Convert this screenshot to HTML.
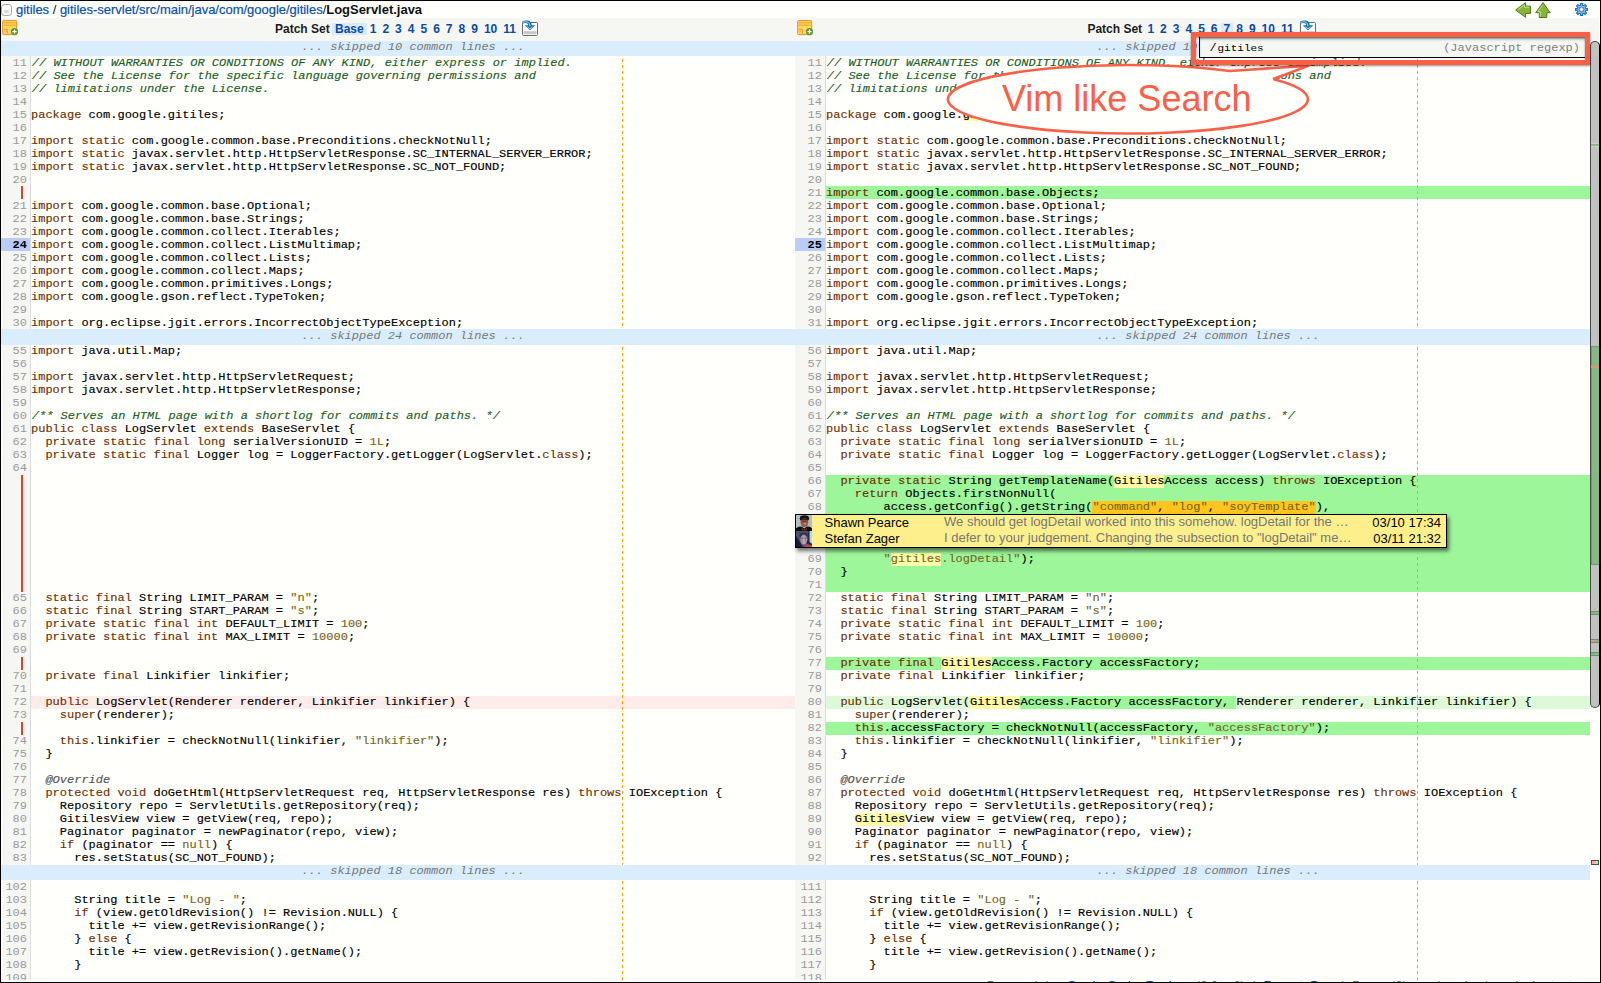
<!DOCTYPE html>
<html lang="en">
<head>
<meta charset="utf-8">
<title>gitiles / LogServlet.java</title>
<style>
html,body{margin:0;padding:0}
body{width:1601px;height:983px;background:#000;overflow:hidden;position:relative;font-family:"Liberation Sans",Arial,sans-serif}
#page{position:absolute;left:1px;top:1px;width:1599px;height:981px;background:#fffffc;overflow:hidden}
#w{position:absolute;left:-1px;top:-1px;width:1601px;height:983px}
#w>*{position:absolute}
/* top header */
#hdr{left:16px;top:2px;letter-spacing:-0.02px;height:16px;line-height:16px;font-size:13px;color:#111;white-space:pre}
#hdr a{color:#0850a8;-webkit-text-stroke:0.2px}
#hdr b{color:#111}
#cb{left:1px;top:4px;width:9.4px;height:10px;border:1.1px solid #aba6a6;border-radius:3.2px;background:linear-gradient(#fffffd,#f6f6f4)}
#cb i{position:absolute;left:1.7px;top:5.2px;width:5.7px;height:2.4px;background:#dcdcdb;border-radius:.5px}
#navbg{left:1px;top:18px;width:1598px;height:23px;background:#f6f7f3}
.nav{top:21px;height:16px;line-height:16px;font-size:12px;font-weight:bold;color:#1c1c1c;white-space:pre}
.nav a{display:inline-block;padding:0 3px;color:#0a4aa6;height:12px;line-height:12px}
.nav a.sel{background:#d8ebfa}
.nav b+a{margin-left:-1px}
/* panes */
.pane{z-index:0;top:41px;width:795px;height:939px;overflow:hidden;font-family:"Liberation Mono","Courier New",monospace;font-size:12px;line-height:13px;color:#000}
#lp{left:0}
#rp{left:795px}
.gut{position:absolute;left:1px;top:0;width:29px;height:100%;background:#f6f7f3;border-right:1px solid #dcdcdc;border-left:1px solid #fffffc;box-sizing:content-box;width:28px}
#rp .gut{left:0;width:30px;border-left:0}
.r,.pad,.skip{position:relative}
.r{height:13px}
.n{position:absolute;left:0;top:0;width:27px;height:13px;text-align:right;color:#9a9a9a;padding-right:3px}
.n.act{background:#b9cdf8;color:#000;font-weight:bold}
#lp .n.act{left:1px;width:26px}
.c{position:absolute;left:31px;right:0;top:0;height:100%}
.t{position:relative;top:1px;white-space:pre;display:inline-block;height:13px;transform-origin:0 9.7px;transform:scaleY(.86)}
.c i{position:absolute;top:0;height:13px}
.ins{background:#9ef69a}
.il{background:#def9da}
.dl{background:#fdecea}
.id{background:#9ef69a}
.sr{background:#fffba6}
.rg{background:#fec61c}
.k{color:#702e00}
.c .t{-webkit-text-stroke:0.15px}
.s{color:#776622}
.cm{color:#1c601e;font-style:italic;position:relative;left:.8px}
.m{color:#555;font-style:italic}
.skip{height:15px;background:#d9edfd;z-index:2;text-align:center;padding-left:31px;font-style:italic;color:#777;line-height:14px}
.skip .t{top:-1px}
.skip.s2{height:16px}
.skip.s2 .t{top:0}
.sec2 .t{top:0}
.bar{position:absolute;left:21px;top:0;bottom:0;width:2px;background:#e2402f}
.ruler{position:absolute;left:622px;top:15px;width:1px;height:925px;z-index:1;background:repeating-linear-gradient(to bottom,transparent 0,transparent 3px,#ffa000 3px,#ffa000 6px)}
/* comment box */
.cw{z-index:3}
.cbox{position:absolute;left:0;top:0;width:650px;height:32px;border:1px solid #000;background:#fdf08c;box-shadow:2px 3px 4px rgba(0,0,0,.55);font-family:"Liberation Sans",Arial,sans-serif;font-size:13px;line-height:16px}
.cr{position:relative;height:16px;white-space:pre}
.cr>*{position:absolute;top:0}
.av{left:0}
.who{left:28.5px;color:#000}
.msg{left:148px;top:-1px !important;color:#777}
.dt{right:5px;color:#000}
/* scrollbar */
#sb{left:1590px;top:41px;width:10px;height:667px;background:#c1c1c0;border:1px solid #4a4a4a;border-right-color:#000;box-sizing:border-box;border-radius:5px / 5px}
.tk{left:1591px;width:8px;box-sizing:border-box}
#dlg{left:1199px;top:37px;width:386px;height:20px;border-left:1px solid #000;border-bottom:1px solid #000;background:#f5f7f3;box-shadow:inset 0 3px 3px -1px rgba(70,85,90,.55);font-family:"Liberation Mono","Courier New",monospace;font-size:12px;line-height:13px;white-space:pre}
#dlg span{position:absolute;top:5px;display:inline-block;height:13px;transform-origin:0 9.7px;transform:scaleY(.86)}
#dlg .q{left:9.5px;color:#000}
#dlg .q2{left:17.5px;color:#000;font-size:11px}
#dlg .h{right:6px;color:#7f7f7f}
#red{left:1191px;top:32px;width:389px;height:23px;border:5px solid #fa6048;box-shadow:0 1px 2px rgba(0,0,0,.45),inset 0 1px 2px rgba(0,0,0,.4)}
#foot{left:975px;top:980px;width:615px;height:12px;font-size:13px;line-height:12px;word-spacing:4px;color:#777;white-space:pre;text-align:center}
#foot a{color:#0a4fa5}

</style>
</head>
<body>
<div id="page"><div id="w">
<div id="cb"><i></i></div>
<div id="hdr"><a>gitiles</a> / <a>gitiles-servlet/src/main/java/com/google/gitiles</a>/<b>LogServlet.java</b></div>
<svg style="left:1515px;top:2px" width="16" height="16" viewBox="0 0 16 16"><path d="M0.6 8 L10.6 0.7 L10.6 4.2 L15.5 4.2 L15.5 11.4 L10.6 11.4 L10.6 15.3 Z" fill="#86b53a" stroke="#4c7a1b" stroke-width="1" stroke-linejoin="miter"/><path d="M2.6 8 L9.5 3 L9.5 5.3 L14.4 5.3" fill="none" stroke="#c3dd90" stroke-width="1"/></svg>
<svg style="left:1535px;top:2px" width="16" height="16" viewBox="0 0 16 16"><path d="M8 0.6 L15.3 10.7 L11.8 10.7 L11.8 15.5 L4.3 15.5 L4.3 10.7 L0.7 10.7 Z" fill="#86b53a" stroke="#4c7a1b" stroke-width="1" stroke-linejoin="miter"/><path d="M8 2.6 L2.8 9.7 L5.4 9.7 L5.4 14.4" fill="none" stroke="#c3dd90" stroke-width="1"/></svg>
<svg style="left:1575px;top:3px" width="13" height="13" viewBox="0 0 13 13"><path d="M10.81 5.60 L12.52 5.50 L12.52 7.50 L10.81 7.40 L10.18 8.91 L11.46 10.05 L10.05 11.46 L8.91 10.18 L7.40 10.81 L7.50 12.52 L5.50 12.52 L5.60 10.81 L4.09 10.18 L2.95 11.46 L1.54 10.05 L2.82 8.91 L2.19 7.40 L0.48 7.50 L0.48 5.50 L2.19 5.60 L2.82 4.09 L1.54 2.95 L2.95 1.54 L4.09 2.82 L5.60 2.19 L5.50 0.48 L7.50 0.48 L7.40 2.19 L8.91 2.82 L10.05 1.54 L11.46 2.95 L10.18 4.09Z" fill="#b4c4e2" stroke="#1571cf" stroke-width="1.15"/><circle cx="6.5" cy="6.5" r="2.6" fill="#aebfdf" stroke="#1a76cf" stroke-width="0.9"/><circle cx="6.5" cy="6.5" r="1.3" fill="#fff"/></svg>
<div id="navbg"></div>
<svg style="left:2px;top:20px" width="17" height="16" viewBox="0 0 17 16"><rect x="0.7" y="0.6" width="14" height="14" rx="0.8" fill="#fcd768" stroke="#e2912a"/><rect x="1.6" y="2.2" width="12.2" height="1.1" fill="#f2a51c"/><rect x="1.6" y="4.6" width="12.2" height="1.1" fill="#f2a51c"/><path d="M1.8 9.4 H5.4 V13.4" fill="none" stroke="#e2912a" stroke-width="0.9"/><rect x="2.6" y="10.6" width="1.6" height="1.8" fill="#f2b23a"/><circle cx="12.5" cy="11.6" r="3.6" fill="#5c992c"/><path d="M12.5 9.5 V13.7 M10.4 11.6 H14.6" stroke="#fff" stroke-width="1.3"/></svg>
<svg style="left:797px;top:20px" width="17" height="16" viewBox="0 0 17 16"><rect x="0.7" y="0.6" width="14" height="14" rx="0.8" fill="#fcd768" stroke="#e2912a"/><rect x="1.6" y="2.2" width="12.2" height="1.1" fill="#f2a51c"/><rect x="1.6" y="4.6" width="12.2" height="1.1" fill="#f2a51c"/><path d="M1.8 9.4 H5.4 V13.4" fill="none" stroke="#e2912a" stroke-width="0.9"/><rect x="2.6" y="10.6" width="1.6" height="1.8" fill="#f2b23a"/><circle cx="12.5" cy="11.6" r="3.6" fill="#5c992c"/><path d="M12.5 9.5 V13.7 M10.4 11.6 H14.6" stroke="#fff" stroke-width="1.3"/></svg>
<svg style="left:522px;top:20px" width="16" height="17" viewBox="0 0 16 17"><rect x="0.5" y="2.5" width="15" height="13" rx="1.2" fill="#fff" stroke="#6d6d68"/><rect x="1.5" y="11.2" width="13" height="3" fill="#c8c8c6"/><path d="M0.2 1.4 C4 0.1 9.4 -0.2 9.7 5.2 L13.3 5.2 L8 10.3 L2.8 5.2 L6.2 5.2 C6.3 2.8 3.6 2.4 0.2 3.5 Z" fill="#0e6fa6"/><path d="M0.8 2.3 C4.5 1.3 7.8 1.6 7.9 6.4" stroke="#bfe0f5" stroke-width="1" fill="none"/><path d="M5.2 6.6 L8 8.8 L10.8 6.6" stroke="#cfe6f5" stroke-width="0.8" fill="none"/></svg>
<svg style="left:1300px;top:20px" width="16" height="17" viewBox="0 0 16 17"><rect x="0.5" y="2.5" width="15" height="13" rx="1.2" fill="#fff" stroke="#6d6d68"/><rect x="1.5" y="11.2" width="13" height="3" fill="#c8c8c6"/><path d="M0.2 1.4 C4 0.1 9.4 -0.2 9.7 5.2 L13.3 5.2 L8 10.3 L2.8 5.2 L6.2 5.2 C6.3 2.8 3.6 2.4 0.2 3.5 Z" fill="#0e6fa6"/><path d="M0.8 2.3 C4.5 1.3 7.8 1.6 7.9 6.4" stroke="#bfe0f5" stroke-width="1" fill="none"/><path d="M5.2 6.6 L8 8.8 L10.8 6.6" stroke="#cfe6f5" stroke-width="0.8" fill="none"/></svg>

<div class="nav" style="left:275px"><b>Patch Set</b> <a class="sel">Base</a><a>1</a><a>2</a><a>3</a><a>4</a><a>5</a><a>6</a><a>7</a><a>8</a><a>9</a><a>10</a><a>11</a></div>
<div class="nav" style="left:1087.4px"><b>Patch Set</b> <a>1</a><a>2</a><a>3</a><a>4</a><a>5</a><a>6</a><a class="sel">7</a><a>8</a><a>9</a><a>10</a><a>11</a></div>
<div class="pane" id="lp">
<div class="gut"></div>
<div class="skip"><span class="t">... skipped 10 common lines ...</span></div>
<div class="r"><span class="n"><span class="t">11</span></span><div class="c"><span class="t"><span class="cm">// WITHOUT WARRANTIES OR CONDITIONS OF ANY KIND, either express or implied.</span></span></div></div>
<div class="r"><span class="n"><span class="t">12</span></span><div class="c"><span class="t"><span class="cm">// See the License for the specific language governing permissions and</span></span></div></div>
<div class="r"><span class="n"><span class="t">13</span></span><div class="c"><span class="t"><span class="cm">// limitations under the License.</span></span></div></div>
<div class="r"><span class="n"><span class="t">14</span></span><div class="c"><span class="t"></span></div></div>
<div class="r"><span class="n"><span class="t">15</span></span><div class="c"><span class="t"><span class="k">package</span> com.google.gitiles;</span></div></div>
<div class="r"><span class="n"><span class="t">16</span></span><div class="c"><span class="t"></span></div></div>
<div class="r"><span class="n"><span class="t">17</span></span><div class="c"><span class="t"><span class="k">import</span> <span class="k">static</span> com.google.common.base.Preconditions.checkNotNull;</span></div></div>
<div class="r"><span class="n"><span class="t">18</span></span><div class="c"><span class="t"><span class="k">import</span> <span class="k">static</span> javax.servlet.http.HttpServletResponse.SC_INTERNAL_SERVER_ERROR;</span></div></div>
<div class="r"><span class="n"><span class="t">19</span></span><div class="c"><span class="t"><span class="k">import</span> <span class="k">static</span> javax.servlet.http.HttpServletResponse.SC_NOT_FOUND;</span></div></div>
<div class="r"><span class="n"><span class="t">20</span></span><div class="c"><span class="t"></span></div></div>
<div class="pad" style="height:13px"><i class="bar"></i><div class="c"></div></div>
<div class="r"><span class="n"><span class="t">21</span></span><div class="c"><span class="t"><span class="k">import</span> com.google.common.base.Optional;</span></div></div>
<div class="r"><span class="n"><span class="t">22</span></span><div class="c"><span class="t"><span class="k">import</span> com.google.common.base.Strings;</span></div></div>
<div class="r"><span class="n"><span class="t">23</span></span><div class="c"><span class="t"><span class="k">import</span> com.google.common.collect.Iterables;</span></div></div>
<div class="r"><span class="n act"><span class="t">24</span></span><div class="c"><span class="t"><span class="k">import</span> com.google.common.collect.ListMultimap;</span></div></div>
<div class="r"><span class="n"><span class="t">25</span></span><div class="c"><span class="t"><span class="k">import</span> com.google.common.collect.Lists;</span></div></div>
<div class="r"><span class="n"><span class="t">26</span></span><div class="c"><span class="t"><span class="k">import</span> com.google.common.collect.Maps;</span></div></div>
<div class="r"><span class="n"><span class="t">27</span></span><div class="c"><span class="t"><span class="k">import</span> com.google.common.primitives.Longs;</span></div></div>
<div class="r"><span class="n"><span class="t">28</span></span><div class="c"><span class="t"><span class="k">import</span> com.google.gson.reflect.TypeToken;</span></div></div>
<div class="r"><span class="n"><span class="t">29</span></span><div class="c"><span class="t"></span></div></div>
<div class="r"><span class="n"><span class="t">30</span></span><div class="c"><span class="t"><span class="k">import</span> org.eclipse.jgit.errors.IncorrectObjectTypeException;</span></div></div>
<div class="skip s2"><span class="t">... skipped 24 common lines ...</span></div>
<div class="sec2">
<div class="r"><span class="n"><span class="t">55</span></span><div class="c"><span class="t"><span class="k">import</span> java.util.Map;</span></div></div>
<div class="r"><span class="n"><span class="t">56</span></span><div class="c"><span class="t"></span></div></div>
<div class="r"><span class="n"><span class="t">57</span></span><div class="c"><span class="t"><span class="k">import</span> javax.servlet.http.HttpServletRequest;</span></div></div>
<div class="r"><span class="n"><span class="t">58</span></span><div class="c"><span class="t"><span class="k">import</span> javax.servlet.http.HttpServletResponse;</span></div></div>
<div class="r"><span class="n"><span class="t">59</span></span><div class="c"><span class="t"></span></div></div>
<div class="r"><span class="n"><span class="t">60</span></span><div class="c"><span class="t"><span class="cm">/** Serves an HTML page with a shortlog for commits and paths. */</span></span></div></div>
<div class="r"><span class="n"><span class="t">61</span></span><div class="c"><span class="t"><span class="k">public</span> <span class="k">class</span> LogServlet <span class="k">extends</span> BaseServlet {</span></div></div>
<div class="r"><span class="n"><span class="t">62</span></span><div class="c"><span class="t">  <span class="k">private</span> <span class="k">static</span> <span class="k">final</span> <span class="k">long</span> serialVersionUID = <span class="s">1L</span>;</span></div></div>
<div class="r"><span class="n"><span class="t">63</span></span><div class="c"><span class="t">  <span class="k">private</span> <span class="k">static</span> <span class="k">final</span> Logger log = LoggerFactory.getLogger(LogServlet.<span class="k">class</span>);</span></div></div>
<div class="r"><span class="n"><span class="t">64</span></span><div class="c"><span class="t"></span></div></div>
<div class="pad" style="height:117px"><i class="bar"></i><div class="c"></div></div>
<div class="r"><span class="n"><span class="t">65</span></span><div class="c"><span class="t">  <span class="k">static</span> <span class="k">final</span> String LIMIT_PARAM = <span class="s">"n"</span>;</span></div></div>
<div class="r"><span class="n"><span class="t">66</span></span><div class="c"><span class="t">  <span class="k">static</span> <span class="k">final</span> String START_PARAM = <span class="s">"s"</span>;</span></div></div>
<div class="r"><span class="n"><span class="t">67</span></span><div class="c"><span class="t">  <span class="k">private</span> <span class="k">static</span> <span class="k">final</span> <span class="k">int</span> DEFAULT_LIMIT = <span class="s">100</span>;</span></div></div>
<div class="r"><span class="n"><span class="t">68</span></span><div class="c"><span class="t">  <span class="k">private</span> <span class="k">static</span> <span class="k">final</span> <span class="k">int</span> MAX_LIMIT = <span class="s">10000</span>;</span></div></div>
<div class="r"><span class="n"><span class="t">69</span></span><div class="c"><span class="t"></span></div></div>
<div class="pad" style="height:13px"><i class="bar"></i><div class="c"></div></div>
<div class="r"><span class="n"><span class="t">70</span></span><div class="c"><span class="t">  <span class="k">private</span> <span class="k">final</span> Linkifier linkifier;</span></div></div>
<div class="r"><span class="n"><span class="t">71</span></span><div class="c"><span class="t"></span></div></div>
<div class="r"><span class="n"><span class="t">72</span></span><div class="c dl"><span class="t">  <span class="k">public</span> LogServlet(Renderer renderer, Linkifier linkifier) {</span></div></div>
<div class="r"><span class="n"><span class="t">73</span></span><div class="c"><span class="t">    <span class="k">super</span>(renderer);</span></div></div>
<div class="pad" style="height:13px"><i class="bar"></i><div class="c"></div></div>
<div class="r"><span class="n"><span class="t">74</span></span><div class="c"><span class="t">    <span class="k">this</span>.linkifier = checkNotNull(linkifier, <span class="s">"linkifier"</span>);</span></div></div>
<div class="r"><span class="n"><span class="t">75</span></span><div class="c"><span class="t">  }</span></div></div>
<div class="r"><span class="n"><span class="t">76</span></span><div class="c"><span class="t"></span></div></div>
<div class="r"><span class="n"><span class="t">77</span></span><div class="c"><span class="t">  <span class="m">@Override</span></span></div></div>
<div class="r"><span class="n"><span class="t">78</span></span><div class="c"><span class="t">  <span class="k">protected</span> <span class="k">void</span> doGetHtml(HttpServletRequest req, HttpServletResponse res) <span class="k">throws</span> IOException {</span></div></div>
<div class="r"><span class="n"><span class="t">79</span></span><div class="c"><span class="t">    Repository repo = ServletUtils.getRepository(req);</span></div></div>
<div class="r"><span class="n"><span class="t">80</span></span><div class="c"><span class="t">    GitilesView view = getView(req, repo);</span></div></div>
<div class="r"><span class="n"><span class="t">81</span></span><div class="c"><span class="t">    Paginator paginator = newPaginator(repo, view);</span></div></div>
<div class="r"><span class="n"><span class="t">82</span></span><div class="c"><span class="t">    <span class="k">if</span> (paginator == <span class="s">null</span>) {</span></div></div>
<div class="r"><span class="n"><span class="t">83</span></span><div class="c"><span class="t">      res.setStatus(SC_NOT_FOUND);</span></div></div>
</div>
<div class="skip s3"><span class="t">... skipped 18 common lines ...</span></div>
<div class="r"><span class="n"><span class="t">102</span></span><div class="c"><span class="t"></span></div></div>
<div class="r"><span class="n"><span class="t">103</span></span><div class="c"><span class="t">      String title = <span class="s">"Log - "</span>;</span></div></div>
<div class="r"><span class="n"><span class="t">104</span></span><div class="c"><span class="t">      <span class="k">if</span> (view.getOldRevision() != Revision.NULL) {</span></div></div>
<div class="r"><span class="n"><span class="t">105</span></span><div class="c"><span class="t">        title += view.getRevisionRange();</span></div></div>
<div class="r"><span class="n"><span class="t">106</span></span><div class="c"><span class="t">      } <span class="k">else</span> {</span></div></div>
<div class="r"><span class="n"><span class="t">107</span></span><div class="c"><span class="t">        title += view.getRevision().getName();</span></div></div>
<div class="r"><span class="n"><span class="t">108</span></span><div class="c"><span class="t">      }</span></div></div>
<div class="r"><span class="n"><span class="t">109</span></span><div class="c"><span class="t"></span></div></div>
<i class="ruler"></i>
</div>
<div class="pane" id="rp">
<div class="gut"></div>
<div class="skip"><span class="t">... skipped 10 common lines ...</span></div>
<div class="r"><span class="n"><span class="t">11</span></span><div class="c"><span class="t"><span class="cm">// WITHOUT WARRANTIES OR CONDITIONS OF ANY KIND, either express or implied.</span></span></div></div>
<div class="r"><span class="n"><span class="t">12</span></span><div class="c"><span class="t"><span class="cm">// See the License for the specific language governing permissions and</span></span></div></div>
<div class="r"><span class="n"><span class="t">13</span></span><div class="c"><span class="t"><span class="cm">// limitations under the License.</span></span></div></div>
<div class="r"><span class="n"><span class="t">14</span></span><div class="c"><span class="t"></span></div></div>
<div class="r"><span class="n"><span class="t">15</span></span><div class="c"><i class="sr" style="left:136.8px;width:50.4px"></i><span class="t"><span class="k">package</span> com.google.gitiles;</span></div></div>
<div class="r"><span class="n"><span class="t">16</span></span><div class="c"><span class="t"></span></div></div>
<div class="r"><span class="n"><span class="t">17</span></span><div class="c"><span class="t"><span class="k">import</span> <span class="k">static</span> com.google.common.base.Preconditions.checkNotNull;</span></div></div>
<div class="r"><span class="n"><span class="t">18</span></span><div class="c"><span class="t"><span class="k">import</span> <span class="k">static</span> javax.servlet.http.HttpServletResponse.SC_INTERNAL_SERVER_ERROR;</span></div></div>
<div class="r"><span class="n"><span class="t">19</span></span><div class="c"><span class="t"><span class="k">import</span> <span class="k">static</span> javax.servlet.http.HttpServletResponse.SC_NOT_FOUND;</span></div></div>
<div class="r"><span class="n"><span class="t">20</span></span><div class="c"><span class="t"></span></div></div>
<div class="r"><span class="n"><span class="t">21</span></span><div class="c ins"><span class="t"><span class="k">import</span> com.google.common.base.Objects;</span></div></div>
<div class="r"><span class="n"><span class="t">22</span></span><div class="c"><span class="t"><span class="k">import</span> com.google.common.base.Optional;</span></div></div>
<div class="r"><span class="n"><span class="t">23</span></span><div class="c"><span class="t"><span class="k">import</span> com.google.common.base.Strings;</span></div></div>
<div class="r"><span class="n"><span class="t">24</span></span><div class="c"><span class="t"><span class="k">import</span> com.google.common.collect.Iterables;</span></div></div>
<div class="r"><span class="n act"><span class="t">25</span></span><div class="c"><span class="t"><span class="k">import</span> com.google.common.collect.ListMultimap;</span></div></div>
<div class="r"><span class="n"><span class="t">26</span></span><div class="c"><span class="t"><span class="k">import</span> com.google.common.collect.Lists;</span></div></div>
<div class="r"><span class="n"><span class="t">27</span></span><div class="c"><span class="t"><span class="k">import</span> com.google.common.collect.Maps;</span></div></div>
<div class="r"><span class="n"><span class="t">28</span></span><div class="c"><span class="t"><span class="k">import</span> com.google.common.primitives.Longs;</span></div></div>
<div class="r"><span class="n"><span class="t">29</span></span><div class="c"><span class="t"><span class="k">import</span> com.google.gson.reflect.TypeToken;</span></div></div>
<div class="r"><span class="n"><span class="t">30</span></span><div class="c"><span class="t"></span></div></div>
<div class="r"><span class="n"><span class="t">31</span></span><div class="c"><span class="t"><span class="k">import</span> org.eclipse.jgit.errors.IncorrectObjectTypeException;</span></div></div>
<div class="skip s2"><span class="t">... skipped 24 common lines ...</span></div>
<div class="sec2">
<div class="r"><span class="n"><span class="t">56</span></span><div class="c"><span class="t"><span class="k">import</span> java.util.Map;</span></div></div>
<div class="r"><span class="n"><span class="t">57</span></span><div class="c"><span class="t"></span></div></div>
<div class="r"><span class="n"><span class="t">58</span></span><div class="c"><span class="t"><span class="k">import</span> javax.servlet.http.HttpServletRequest;</span></div></div>
<div class="r"><span class="n"><span class="t">59</span></span><div class="c"><span class="t"><span class="k">import</span> javax.servlet.http.HttpServletResponse;</span></div></div>
<div class="r"><span class="n"><span class="t">60</span></span><div class="c"><span class="t"></span></div></div>
<div class="r"><span class="n"><span class="t">61</span></span><div class="c"><span class="t"><span class="cm">/** Serves an HTML page with a shortlog for commits and paths. */</span></span></div></div>
<div class="r"><span class="n"><span class="t">62</span></span><div class="c"><span class="t"><span class="k">public</span> <span class="k">class</span> LogServlet <span class="k">extends</span> BaseServlet {</span></div></div>
<div class="r"><span class="n"><span class="t">63</span></span><div class="c"><span class="t">  <span class="k">private</span> <span class="k">static</span> <span class="k">final</span> <span class="k">long</span> serialVersionUID = <span class="s">1L</span>;</span></div></div>
<div class="r"><span class="n"><span class="t">64</span></span><div class="c"><span class="t">  <span class="k">private</span> <span class="k">static</span> <span class="k">final</span> Logger log = LoggerFactory.getLogger(LogServlet.<span class="k">class</span>);</span></div></div>
<div class="r"><span class="n"><span class="t">65</span></span><div class="c"><span class="t"></span></div></div>
<div class="r"><span class="n"><span class="t">66</span></span><div class="c ins"><i class="sr" style="left:288px;width:50.4px"></i><span class="t">  <span class="k">private</span> <span class="k">static</span> String getTemplateName(GitilesAccess access) <span class="k">throws</span> IOException {</span></div></div>
<div class="r"><span class="n"><span class="t">67</span></span><div class="c ins"><span class="t">    <span class="k">return</span> Objects.firstNonNull(</span></div></div>
<div class="r"><span class="n"><span class="t">68</span></span><div class="c ins"><i class="rg" style="left:266.4px;width:223.2px"></i><span class="t">        access.getConfig().getString(<span class="s">"command"</span>, <span class="s">"log"</span>, <span class="s">"soyTemplate"</span>),</span></div></div>
<div class="pad cw" style="height:39px"><div class="c ins"></div>
<div class="cbox">
<div class="cr"><svg class="av" width="16" height="16" viewBox="0 0 16 16"><rect width="16" height="16" fill="#b3bfbe"/><ellipse cx="8.4" cy="3.4" rx="4.7" ry="3.1" fill="#17100f"/><ellipse cx="8.4" cy="7.6" rx="3.9" ry="4.6" fill="#9a5a48"/><rect x="4.8" y="3.4" width="7.2" height="1.8" fill="#241512" opacity=".8"/><ellipse cx="9.2" cy="8.6" rx="1.1" ry="0.9" fill="#e59a8c"/><rect x="6" y="6.2" width="4.8" height="0.9" fill="#4a2620" opacity=".7"/><path d="M0 16 L0 13.2 Q3 10.6 6 11.8 L8.4 13.4 L10.8 11.6 Q14 10.8 16 13.4 L16 16 Z" fill="#120e10"/><path d="M5.2 12.6 L8.4 14.6 L11.2 12.4 L10.6 15.4 L6 15.4 Z" fill="#6b3325" opacity=".8"/></svg><span class="who">Shawn Pearce</span><span class="msg">We should get logDetail worked into this somehow. logDetail for the …</span><span class="dt">03/10 17:34</span></div>
<div class="cr"><svg class="av" width="16" height="16" viewBox="0 0 16 16"><rect width="16" height="16" fill="#4c5268"/><rect x="13.4" width="2.6" height="12.6" fill="#a9dcf1"/><rect x="11.8" width="1.6" height="12" fill="#2a2c40"/><path d="M0 5 L7 16 L0 16 Z" fill="#171c3c"/><ellipse cx="7.6" cy="4.2" rx="4.2" ry="2.6" fill="#2a3358"/><ellipse cx="7.8" cy="8.6" rx="3.5" ry="5.2" fill="#a98c96"/><rect x="6.9" y="5" width="1.8" height="8" fill="#c9b3bb" opacity=".7"/><rect x="4.8" y="6.6" width="6" height="1" fill="#5b4660" opacity=".6"/><path d="M8 16 L9.6 13.2 Q12.6 12.4 16 14.2 L16 16 Z" fill="#b2485a"/><path d="M11.4 9 L16 13 L16 14.6 L10.6 12.8 Z" fill="#1c2c58"/></svg><span class="who">Stefan Zager</span><span class="msg">I defer to your judgement. Changing the subsection to "logDetail" me…</span><span class="dt">03/11 21:32</span></div>
</div></div>
<div class="r"><span class="n"><span class="t">69</span></span><div class="c ins"><i class="sr" style="left:64.8px;width:50.4px"></i><span class="t">        <span class="s">"gitiles.logDetail"</span>);</span></div></div>
<div class="r"><span class="n"><span class="t">70</span></span><div class="c ins"><span class="t">  }</span></div></div>
<div class="r"><span class="n"><span class="t">71</span></span><div class="c ins"><span class="t"></span></div></div>
<div class="r"><span class="n"><span class="t">72</span></span><div class="c"><span class="t">  <span class="k">static</span> <span class="k">final</span> String LIMIT_PARAM = <span class="s">"n"</span>;</span></div></div>
<div class="r"><span class="n"><span class="t">73</span></span><div class="c"><span class="t">  <span class="k">static</span> <span class="k">final</span> String START_PARAM = <span class="s">"s"</span>;</span></div></div>
<div class="r"><span class="n"><span class="t">74</span></span><div class="c"><span class="t">  <span class="k">private</span> <span class="k">static</span> <span class="k">final</span> <span class="k">int</span> DEFAULT_LIMIT = <span class="s">100</span>;</span></div></div>
<div class="r"><span class="n"><span class="t">75</span></span><div class="c"><span class="t">  <span class="k">private</span> <span class="k">static</span> <span class="k">final</span> <span class="k">int</span> MAX_LIMIT = <span class="s">10000</span>;</span></div></div>
<div class="r"><span class="n"><span class="t">76</span></span><div class="c"><span class="t"></span></div></div>
<div class="r"><span class="n"><span class="t">77</span></span><div class="c ins"><i class="sr" style="left:115.2px;width:50.4px"></i><span class="t">  <span class="k">private</span> <span class="k">final</span> GitilesAccess.Factory accessFactory;</span></div></div>
<div class="r"><span class="n"><span class="t">78</span></span><div class="c"><span class="t">  <span class="k">private</span> <span class="k">final</span> Linkifier linkifier;</span></div></div>
<div class="r"><span class="n"><span class="t">79</span></span><div class="c"><span class="t"></span></div></div>
<div class="r"><span class="n"><span class="t">80</span></span><div class="c il"><i class="id" style="left:144px;width:266.4px"></i><i class="sr" style="left:144px;width:50.4px"></i><span class="t">  <span class="k">public</span> LogServlet(GitilesAccess.Factory accessFactory, Renderer renderer, Linkifier linkifier) {</span></div></div>
<div class="r"><span class="n"><span class="t">81</span></span><div class="c"><span class="t">    <span class="k">super</span>(renderer);</span></div></div>
<div class="r"><span class="n"><span class="t">82</span></span><div class="c ins"><span class="t">    <span class="k">this</span>.accessFactory = checkNotNull(accessFactory, <span class="s">"accessFactory"</span>);</span></div></div>
<div class="r"><span class="n"><span class="t">83</span></span><div class="c"><span class="t">    <span class="k">this</span>.linkifier = checkNotNull(linkifier, <span class="s">"linkifier"</span>);</span></div></div>
<div class="r"><span class="n"><span class="t">84</span></span><div class="c"><span class="t">  }</span></div></div>
<div class="r"><span class="n"><span class="t">85</span></span><div class="c"><span class="t"></span></div></div>
<div class="r"><span class="n"><span class="t">86</span></span><div class="c"><span class="t">  <span class="m">@Override</span></span></div></div>
<div class="r"><span class="n"><span class="t">87</span></span><div class="c"><span class="t">  <span class="k">protected</span> <span class="k">void</span> doGetHtml(HttpServletRequest req, HttpServletResponse res) <span class="k">throws</span> IOException {</span></div></div>
<div class="r"><span class="n"><span class="t">88</span></span><div class="c"><span class="t">    Repository repo = ServletUtils.getRepository(req);</span></div></div>
<div class="r"><span class="n"><span class="t">89</span></span><div class="c"><i class="sr" style="left:28.8px;width:50.4px"></i><span class="t">    GitilesView view = getView(req, repo);</span></div></div>
<div class="r"><span class="n"><span class="t">90</span></span><div class="c"><span class="t">    Paginator paginator = newPaginator(repo, view);</span></div></div>
<div class="r"><span class="n"><span class="t">91</span></span><div class="c"><span class="t">    <span class="k">if</span> (paginator == <span class="s">null</span>) {</span></div></div>
<div class="r"><span class="n"><span class="t">92</span></span><div class="c"><span class="t">      res.setStatus(SC_NOT_FOUND);</span></div></div>
</div>
<div class="skip s3"><span class="t">... skipped 18 common lines ...</span></div>
<div class="r"><span class="n"><span class="t">111</span></span><div class="c"><span class="t"></span></div></div>
<div class="r"><span class="n"><span class="t">112</span></span><div class="c"><span class="t">      String title = <span class="s">"Log - "</span>;</span></div></div>
<div class="r"><span class="n"><span class="t">113</span></span><div class="c"><span class="t">      <span class="k">if</span> (view.getOldRevision() != Revision.NULL) {</span></div></div>
<div class="r"><span class="n"><span class="t">114</span></span><div class="c"><span class="t">        title += view.getRevisionRange();</span></div></div>
<div class="r"><span class="n"><span class="t">115</span></span><div class="c"><span class="t">      } <span class="k">else</span> {</span></div></div>
<div class="r"><span class="n"><span class="t">116</span></span><div class="c"><span class="t">        title += view.getRevision().getName();</span></div></div>
<div class="r"><span class="n"><span class="t">117</span></span><div class="c"><span class="t">      }</span></div></div>
<div class="r"><span class="n"><span class="t">118</span></span><div class="c"><span class="t"></span></div></div>
<i class="ruler"></i>
</div>

<div id="sb"></div>
<div class="tk" style="top:143px;height:4px;background:#87b987;border:1px solid #c9d6c9;border-width:1px 0"></div>
<div class="tk" style="top:346px;height:219px;background:#86b886;border:1px solid #6f9a6f;border-width:1px 0 1px 1px"></div>
<div class="tk" style="top:365px;height:3px;background:#c9a366"></div>
<div class="tk" style="top:611px;height:4px;background:#87b987;border:1px solid #6f8f6f;border-width:1px 0"></div>
<div class="tk" style="top:639px;height:4px;background:linear-gradient(to right,#d89a8c 0,#d89a8c 45%,#87b987 45%);border:1px solid #6f8f6f;border-width:1px 0"></div>
<div class="tk" style="top:652px;height:4px;background:#87b987;border:1px solid #6f8f6f;border-width:1px 0"></div>
<div class="tk" style="top:860px;height:5px;background:linear-gradient(to right,#f7a9a0 0,#f7a9a0 45%,#9ef69a 45%);border:1px solid #4f4f4f"></div>
<svg id="bub" style="left:940px;top:55px" width="380" height="90" viewBox="940 55 380 90"><path d="M1230 71 L1309 65.6 L1273.2 79 A180 34.3 0 1 1 1230 71 Z" fill="#fffffc" stroke="#fa6048" stroke-width="2.6" stroke-linejoin="miter" stroke-miterlimit="2.2"/><text x="1002" y="110.6" font-family="Liberation Sans, Arial, sans-serif" font-size="36" fill="#fa6048">Vim like Search</text></svg>
<div id="dlg"><span class="q">/</span><span class="q2">gitiles</span><span class="h">(Javascript regexp)</span></div>
<div id="red"></div>
<div id="foot">Powered by <a>Gerrit Code Review</a> (2.9-rc0) | <a>Report Bug</a> | Press '?' to view keyboard shortcuts</div>

</div></div>
</body>
</html>
